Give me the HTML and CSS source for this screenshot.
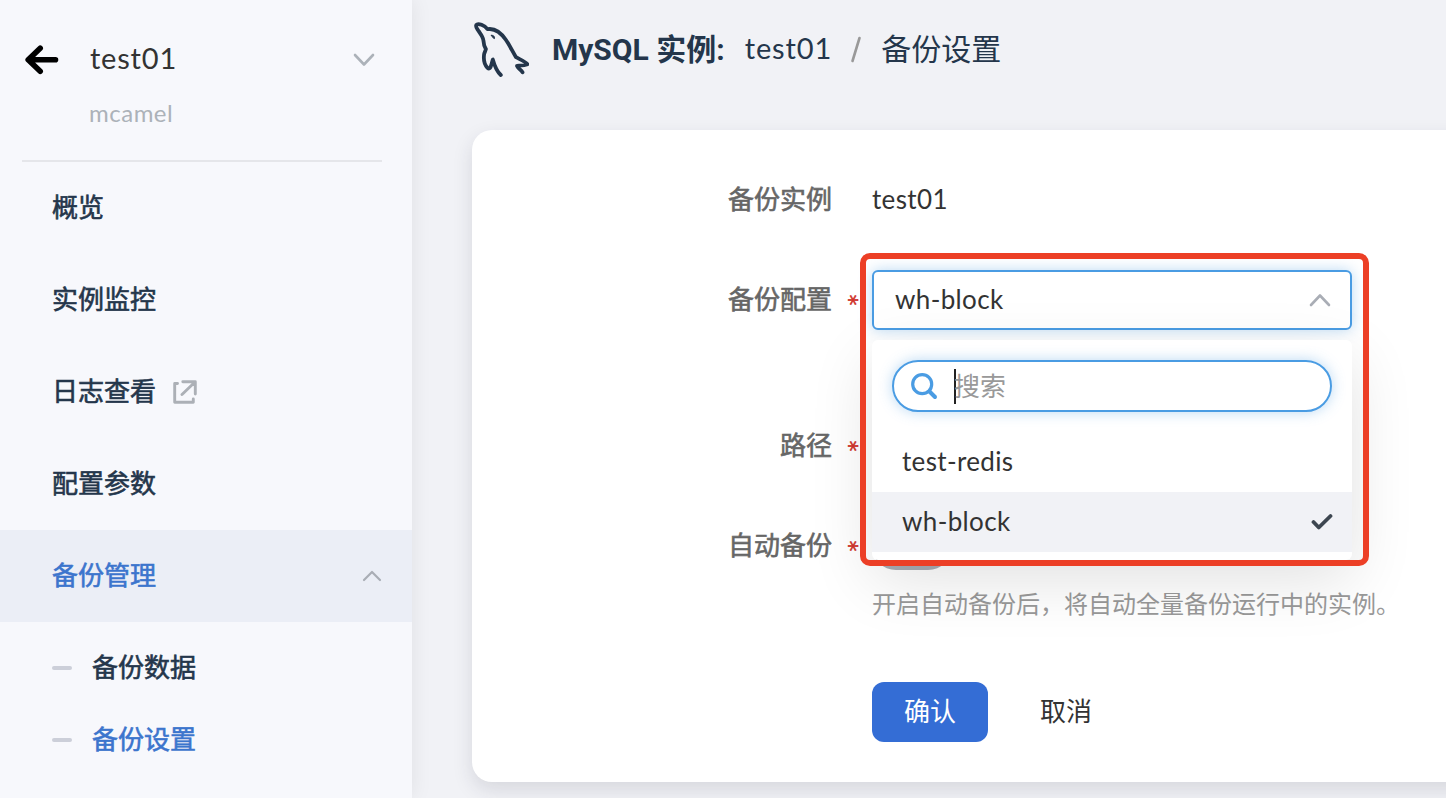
FILE: index.html
```html
<!DOCTYPE html>
<html lang="zh-CN">
<head>
<meta charset="utf-8">
<title>MySQL 备份设置</title>
<link rel="stylesheet" href="styles.css">
</head>
<body>
<div class="app">
  <aside class="sidebar">
    <header class="instance">
      <svg class="back" width="36" height="32" viewBox="0 0 36 32"><path d="M17.200 4.200 5.200 15.700l12 11.500M6.200 15.700H32.500" fill="none" stroke="#000" stroke-width="5.600" stroke-linecap="round" stroke-linejoin="round"/></svg>
      <div class="instance-text">
        <div class="instance-name">test01</div>
        <div class="instance-ns">mcamel</div>
      </div>
      <svg class="instance-toggle" width="22" height="14" viewBox="0 0 22 14"><path d="m2 2 9 9.500L20 2" fill="none" stroke="#acb2b9" stroke-width="2.600" stroke-linecap="round" stroke-linejoin="round"/></svg>
    </header>
    <nav class="menu">
      <a class="item">概览</a>
      <a class="item">实例监控</a>
      <a class="item">日志查看
        <svg class="external" width="24" height="24" viewBox="0 0 24 24"><path d="M4.500 3.500H1.700v18.800h18.600v-3.300M9.800 1.700h12.500v12.300M22 2 9 14.500" fill="none" stroke="#acb0b6" stroke-width="2.900" stroke-linecap="round" stroke-linejoin="round"/></svg>
      </a>
      <a class="item">配置参数</a>
      <a class="item open">备份管理
        <svg class="chevron" width="20" height="12" viewBox="0 0 20 12"><path d="m2 10 8-8 8 8" fill="none" stroke="#a9adb5" stroke-width="2.200" stroke-linecap="round" stroke-linejoin="round"/></svg>
      </a>
      <div class="submenu">
        <a class="subitem">备份数据</a>
        <a class="subitem active">备份设置</a>
      </div>
    </nav>
  </aside>
  <main class="main">
    <header class="page-head">
      <svg class="dolphin" width="60" height="60" viewBox="0 0 60 60" fill="none" stroke="#24364b" stroke-width="3.800" stroke-linecap="round" stroke-linejoin="round"><path d="M31.800 55C28.500 52 26 47.500 23.800 39.500c-1 3-1.300 5.500-2.300 7.800-.6 1.300-1.700 1.700-3 .5-3.700-3.800-4-9-3.400-13.500.3-1.800 1.400-3.500 1.800-5.200-1.500-2.300-2.300-5.300-2.500-8.700-.4-3.400-2.500-6-4.700-9.200C8 8.500 6.300 7 7.300 5c1.700-2.300 8.500.5 11.200 4.200C26.500 7.800 32.500 13.500 37 20c3.700 5.400 6.500 11.500 10 17.200 3.200 2 8.500 3.700 11.500 7-3.200 1.300-7 1.300-10.500 1.600 1.400 2.900 4 4.200 5.500 6.500"/><path d="M22.500 15.300c1.900-.2 3.200 1 3 3.300-1.500-.4-2.300-1.500-3-3.300z" fill="#24364b" stroke-width="1"/></svg>
      <h1 class="title">MySQL 实例:</h1>
      <span class="crumb crumb-name">test01</span>
      <svg class="slash" width="12" height="28" viewBox="0 0 12 28"><path d="M9.500 2 2.500 25" fill="none" stroke="#999" stroke-width="2.600" stroke-linecap="round"/></svg>
      <span class="crumb">备份设置</span>
    </header>
    <section class="card">
      <div class="row">
        <div class="label">备份实例</div>
        <div class="value latin">test01</div>
      </div>
      <div class="row row-config">
        <div class="label">备份配置<span class="star">*</span></div>
        <div class="picker">
          <div class="select">
            <span class="select-text latin">wh-block</span>
            <svg width="22" height="14" viewBox="0 0 22 14"><path d="m2 12 9-9.500 9 9.500" fill="none" stroke="#a9adb5" stroke-width="2.600" stroke-linecap="round" stroke-linejoin="round"/></svg>
          </div>
          <div class="dropdown">
            <div class="search">
              <svg width="28" height="28" viewBox="0 0 28 28"><g fill="none" stroke="#4a9ce3" stroke-linecap="round"><circle cx="12.200" cy="12.200" r="9.500" stroke-width="3.200"/><path d="m19.500 19.500 5.500 5.500" stroke-width="4"/></g></svg>
              <span class="caret"></span><span class="placeholder">搜索</span>
            </div>
            <div class="option latin">test-redis</div>
            <div class="option selected latin">wh-block
              <svg width="22" height="18" viewBox="0 0 22 18"><path d="m2.500 10 5.300 5.500L19.500 4" fill="none" stroke="#3d4650" stroke-width="3.800" stroke-linecap="round" stroke-linejoin="round"/></svg>
            </div>
          </div>
          <div class="highlight"></div>
        </div>
      </div>
      <div class="row">
        <div class="label">路径<span class="star">*</span></div>
      </div>
      <div class="row row-auto">
        <div class="label">自动备份<span class="star">*</span></div>
        <div class="switch"></div>
      </div>
      <p class="hint">开启自动备份后，将自动全量备份运行中的实例。</p>
      <div class="actions">
        <button class="btn primary">确认</button>
        <button class="btn">取消</button>
      </div>
    </section>
  </main>
</div>
</body>
</html>
```
FILE: styles.css
```css
* { box-sizing: border-box; }

body {
  margin: 0;
  background: #f1f2f6;
  color: #333;
  font: 26px/1 Lato, "Noto Sans CJK SC", sans-serif;
}

.app { display: flex; height: 798px; overflow: hidden; }

.sidebar {
  width: 412px;
  flex: none;
  z-index: 1;
  background: #f7f8fc;
  box-shadow: 0 0 20px rgba(0, 0, 0, .08);
}

.instance {
  display: flex;
  align-items: flex-start;
  height: 162px;
  margin: 0 30px 0 22px;
  border-bottom: 2px solid #e5e6ea;
}
.back { margin: 44px 0 0 1px; }
.instance-text { flex: 1; margin-left: 31px; }
.instance-name { margin-top: 38px; font-size: 29px; line-height: 40px; letter-spacing: .8px; }
.instance-ns { margin: 20px 0 0 -1px; font-size: 24px; line-height: 30px; color: #acb2b9; letter-spacing: .5px; }
.instance-toggle { margin: 53px 7px 0 0; }

.menu { color: #24364b; -webkit-text-stroke: .6px currentColor; }
.item {
  display: flex;
  align-items: center;
  height: 92px;
  padding: 0 30px 2px 52px;
}
.external { margin: 1px 0 0 17px; }
.open { background: #ebeef6; color: #3c75cd; }
.chevron { margin: 2px 0 0 auto; }
.submenu { padding-top: 10px; }
.subitem {
  display: flex;
  align-items: center;
  gap: 20px;
  height: 72px;
  padding: 0 0 2px 52px;
}
.subitem::before {
  content: "";
  width: 20px;
  height: 4px;
  margin-top: 2px;
  border-radius: 2px;
  background: #cccfd9;
}
.active { color: #3c75cd; }

.main { flex: 1; padding-left: 60px; min-width: 0; }
.page-head {
  display: flex;
  align-items: center;
  height: 130px;
  padding-bottom: 32px;
  color: #24364b;
}
.dolphin { margin: 2px 20px 0 -3px; }
.title { margin: 1px 20px 0 3px; font: 700 30px/40px Roboto, "Noto Sans CJK SC", sans-serif; }
.crumb { margin-top: -3px; font-size: 30px; line-height: 40px; }
.crumb-name { margin-top: -2px; font-size: 29px; letter-spacing: .9px; }
.slash { margin: 1px 19px 0 18px; }

.card {
  width: 1100px;
  height: 652px;
  padding-top: 40px;
  border-radius: 20px;
  background: #fff;
  box-shadow: 0 8px 20px rgba(35, 40, 60, .13);
}
.row { display: flex; align-items: center; height: 60px; margin-bottom: 40px; }
.row-config { margin-bottom: 86px; }
.row-auto { margin-bottom: 8px; }
.label {
  position: relative;
  width: 400px;
  padding: 0 40px 2px 0;
  text-align: right;
  color: #666;
  -webkit-text-stroke: .6px currentColor;
}
.star {
  position: absolute;
  right: 15px;
  top: 1px;
  font: 400 21px/26px "DejaVu Sans", sans-serif;
  color: #d0342c;
  transform: translateX(-3px) rotate(90deg);
}
.latin { letter-spacing: .35px; }
.value { padding-bottom: 2px; }

.picker { position: relative; width: 480px; }
.select {
  display: flex;
  align-items: center;
  justify-content: space-between;
  height: 60px;
  padding: 0 19px 0 21px;
  border: 2px solid #4a9ce3;
  border-radius: 6px;
  background: #fff;
  box-shadow: 0 0 14px rgba(74, 156, 227, .38);
}
.select-text { padding-bottom: 2px; }
.dropdown {
  position: absolute;
  z-index: 2;
  top: 70px;
  left: 0;
  width: 480px;
  height: 220px;
  padding-top: 20px;
  border-radius: 6px;
  background: #fff;
  box-shadow: 0 20px 64px rgba(0, 0, 0, .12);
}
.search {
  display: flex;
  align-items: center;
  height: 52px;
  margin: 0 20px 20px;
  padding-left: 16px;
  border: 2px solid #4a9ce3;
  border-radius: 26px;
  box-shadow: 0 0 14px rgba(74, 156, 227, .38);
}
.caret { width: 2px; height: 35px; margin: 1px 0 0 16px; background: #222; }
.placeholder { margin-left: -2px; padding-bottom: 1px; color: #999; }
.option {
  display: flex;
  align-items: center;
  justify-content: space-between;
  height: 60px;
  padding: 0 19px 2px 30px;
}
.selected { background: #f1f2f6; }
.highlight {
  position: absolute;
  z-index: 3;
  top: -17px;
  left: -12px;
  width: 509px;
  height: 313px;
  border: 6px solid #ec3f26;
  border-radius: 10px;
}
.switch { width: 80px; height: 48px; border-radius: 24px; background: #a9adb5; }
.hint { margin: 0 0 58px 400px; font-size: 24px; line-height: 40px; color: #999; }
.actions { display: flex; margin-left: 400px; gap: 20px; }
.btn {
  height: 60px;
  padding: 0 32px 3px;
  border: 0;
  border-radius: 12px;
  background: none;
  color: #333;
  font: inherit;
}
.primary { background: #346dd5; color: #fff; }
```
